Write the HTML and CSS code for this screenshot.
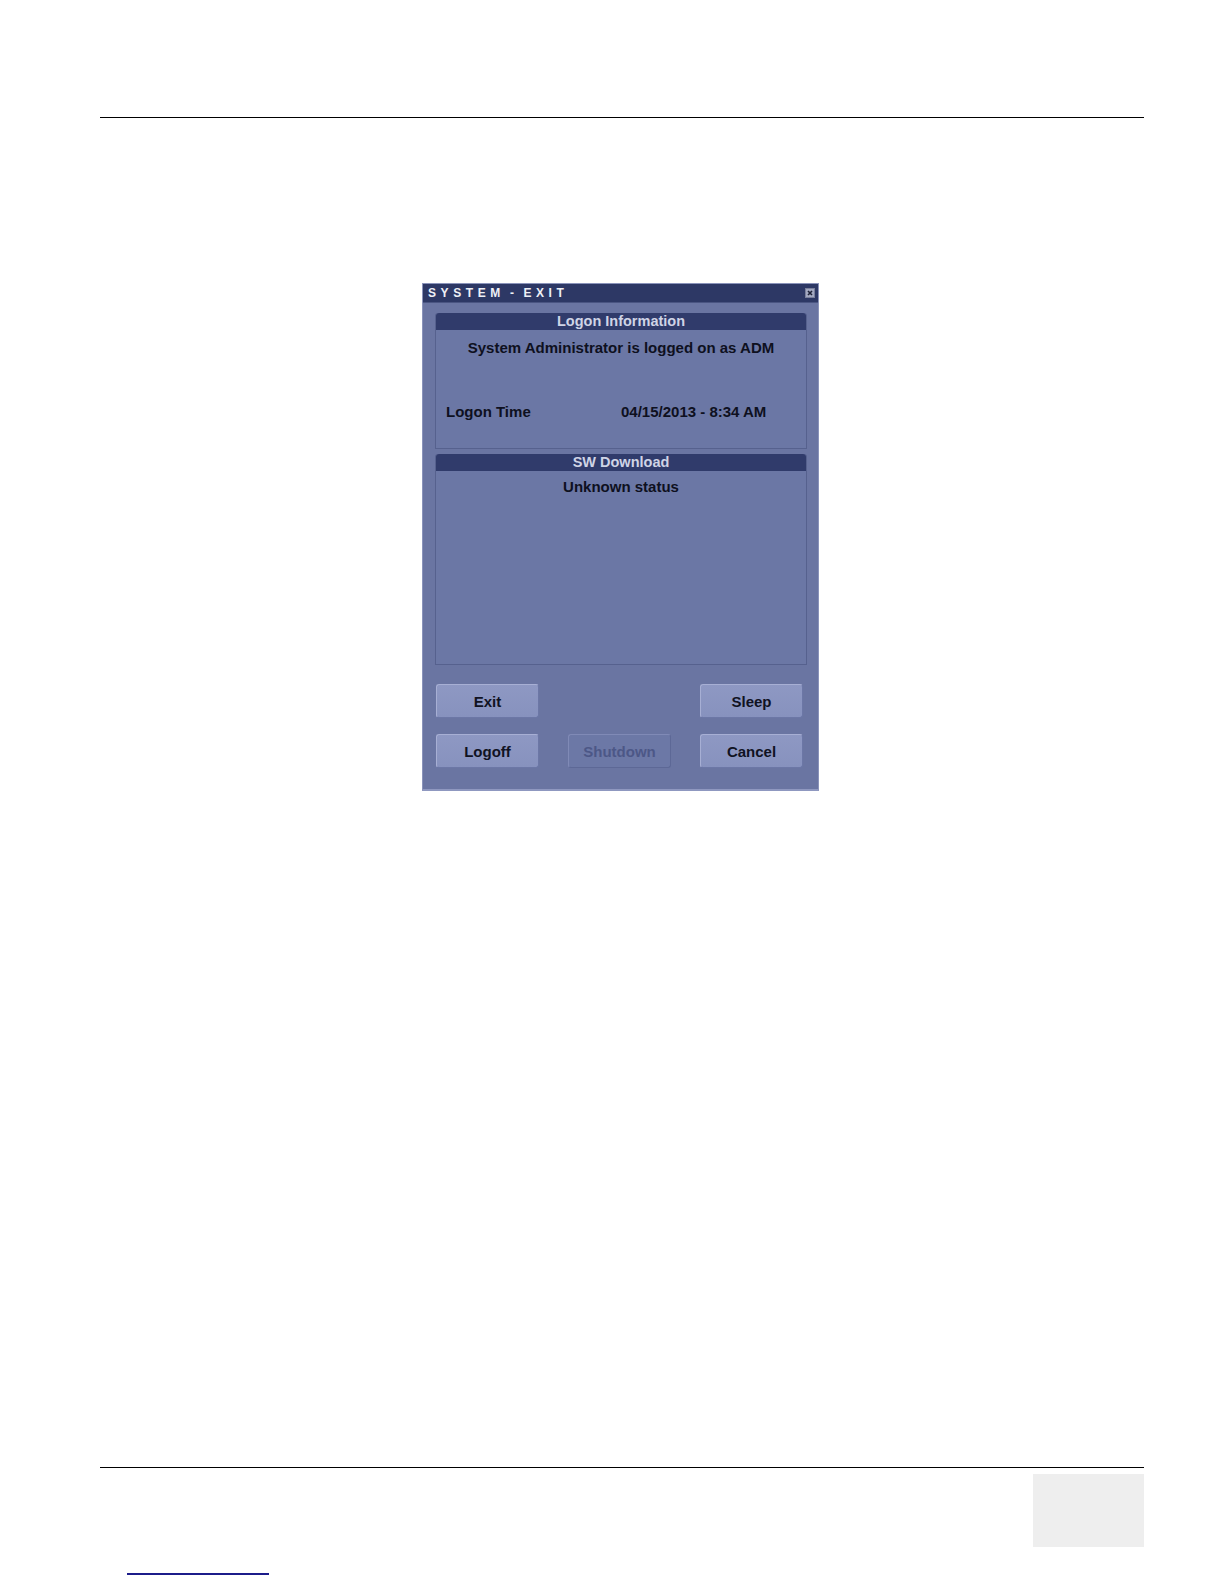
FILE: index.html
```html
<!DOCTYPE html>
<html lang="en">
<head>
<meta charset="utf-8">
<title>System - Exit</title>
<link rel="stylesheet" href="styles.css">
</head>
<body>
<div class="page">
  <div class="rule"></div>
  <main class="content">
    <div class="dialog">
      <div class="titlebar">
        <span class="title">SYSTEM - EXIT</span>
        <span class="close">
          <svg width="10" height="10" viewBox="0 0 10 10"><rect x="0.5" y="0.5" width="9" height="9" fill="#a3a9c2" stroke="#7a809c"/><path d="M3 3 L7 7 M7 3 L3 7" stroke="#1e2238" stroke-width="1.6"/></svg>
        </span>
      </div>
      <div class="body">
        <section class="panel panel-logon">
          <h2 class="panel-head">Logon Information</h2>
          <p class="center-line">System Administrator is logged on as ADM</p>
          <div class="time-row">
            <span class="time-label">Logon Time</span>
            <span class="time-value">04/15/2013 - 8:34 AM</span>
          </div>
        </section>
        <section class="panel panel-sw">
          <h2 class="panel-head">SW Download</h2>
          <p class="center-line status">Unknown status</p>
        </section>
        <div class="buttons">
          <button class="btn">Exit</button>
          <span></span>
          <button class="btn">Sleep</button>
          <button class="btn">Logoff</button>
          <button class="btn disabled">Shutdown</button>
          <button class="btn">Cancel</button>
        </div>
      </div>
    </div>
  </main>
  <div class="rule"></div>
  <footer class="footer">
    <div class="tab-box"></div>
  </footer>
  <div class="link-line"></div>
</div>
</body>
</html>
```

FILE: styles.css
```css
html, body {
  margin: 0;
  padding: 0;
  background: #ffffff;
}

body {
  font-family: "Liberation Sans", Arial, sans-serif;
}

.page {
  width: 1044px;
  margin-left: 100px;
  padding-top: 117px;
}

.rule {
  height: 0;
  border-top: 1.5px solid #000;
}

.content {
  height: 1349px;
  padding-top: 165px;
  box-sizing: border-box;
}

.dialog {
  width: 397px;
  height: 508px;
  margin-left: 322px;
  box-sizing: border-box;
  background: #6a75a2;
  border: 1px solid #8a93ba;
  border-bottom: 2px solid #8f98c0;
  display: flex;
  flex-direction: column;
}

.titlebar {
  height: 18px;
  background: #2d3865;
  display: flex;
  align-items: center;
  justify-content: space-between;
  padding: 0 3px 0 5px;
  border-bottom: 1px solid #4a5582;
}

.title {
  color: #eef0f6;
  font-size: 12px;
  font-weight: bold;
  letter-spacing: 4.6px;
  word-spacing: -3px;
  line-height: 18px;
}

.close {
  display: flex;
  width: 10px;
  height: 10px;
}

.body {
  padding: 10px 11px 0 12px;
  display: flex;
  flex-direction: column;
}

.panel {
  box-sizing: border-box;
  width: 372px;
  background: #6b77a5;
  border: 1px solid #56618e;
  border-top: none;
  border-radius: 3px 3px 0 0;
}

.panel-logon {
  height: 136px;
}

.panel-sw {
  height: 211px;
  margin-top: 5px;
}

.panel-head {
  margin: 0;
  height: 17px;
  line-height: 17px;
  background: #303b6b;
  border-radius: 3px 3px 0 0;
  color: #cfd4e6;
  font-size: 14.5px;
  font-weight: bold;
  text-align: center;
}

.center-line {
  margin: 9px 0 0;
  line-height: 18px;
  font-size: 15px;
  font-weight: bold;
  color: #0e1020;
  text-align: center;
}

.status {
  margin-top: 7px;
}

.time-row {
  margin-top: 46px;
  display: flex;
  line-height: 18px;
  font-size: 15px;
  font-weight: bold;
  color: #0e1020;
}

.time-label {
  margin-left: 10px;
  width: 175px;
}

.buttons {
  margin-top: 19px;
  display: grid;
  grid-template-columns: 103px 103px 103px;
  grid-auto-rows: 34px;
  column-gap: 29px;
  row-gap: 16px;
  padding-left: 1px;
}

.btn {
  font-family: "Liberation Sans", Arial, sans-serif;
  font-size: 15px;
  font-weight: bold;
  color: #101222;
  background: linear-gradient(#8e98c3, #8792be);
  border: 1px solid #a7afd4;
  border-right-color: #6c77a6;
  border-bottom-color: #6c77a6;
  border-radius: 3px;
  padding: 0;
  margin: 0;
}

.btn.disabled {
  background: #6c78a6;
  color: #4c5787;
  border: 1px solid #808ab6;
  border-right-color: #5d6896;
  border-bottom-color: #5d6896;
}

.footer {
  display: flex;
  justify-content: flex-end;
  padding-top: 6px;
}

.tab-box {
  width: 111px;
  height: 73px;
  background: #eeeeee;
}

.link-line {
  margin-top: 26px;
  margin-left: 27px;
  width: 142px;
  height: 0;
  border-top: 2px solid #1c1c8a;
}
```
